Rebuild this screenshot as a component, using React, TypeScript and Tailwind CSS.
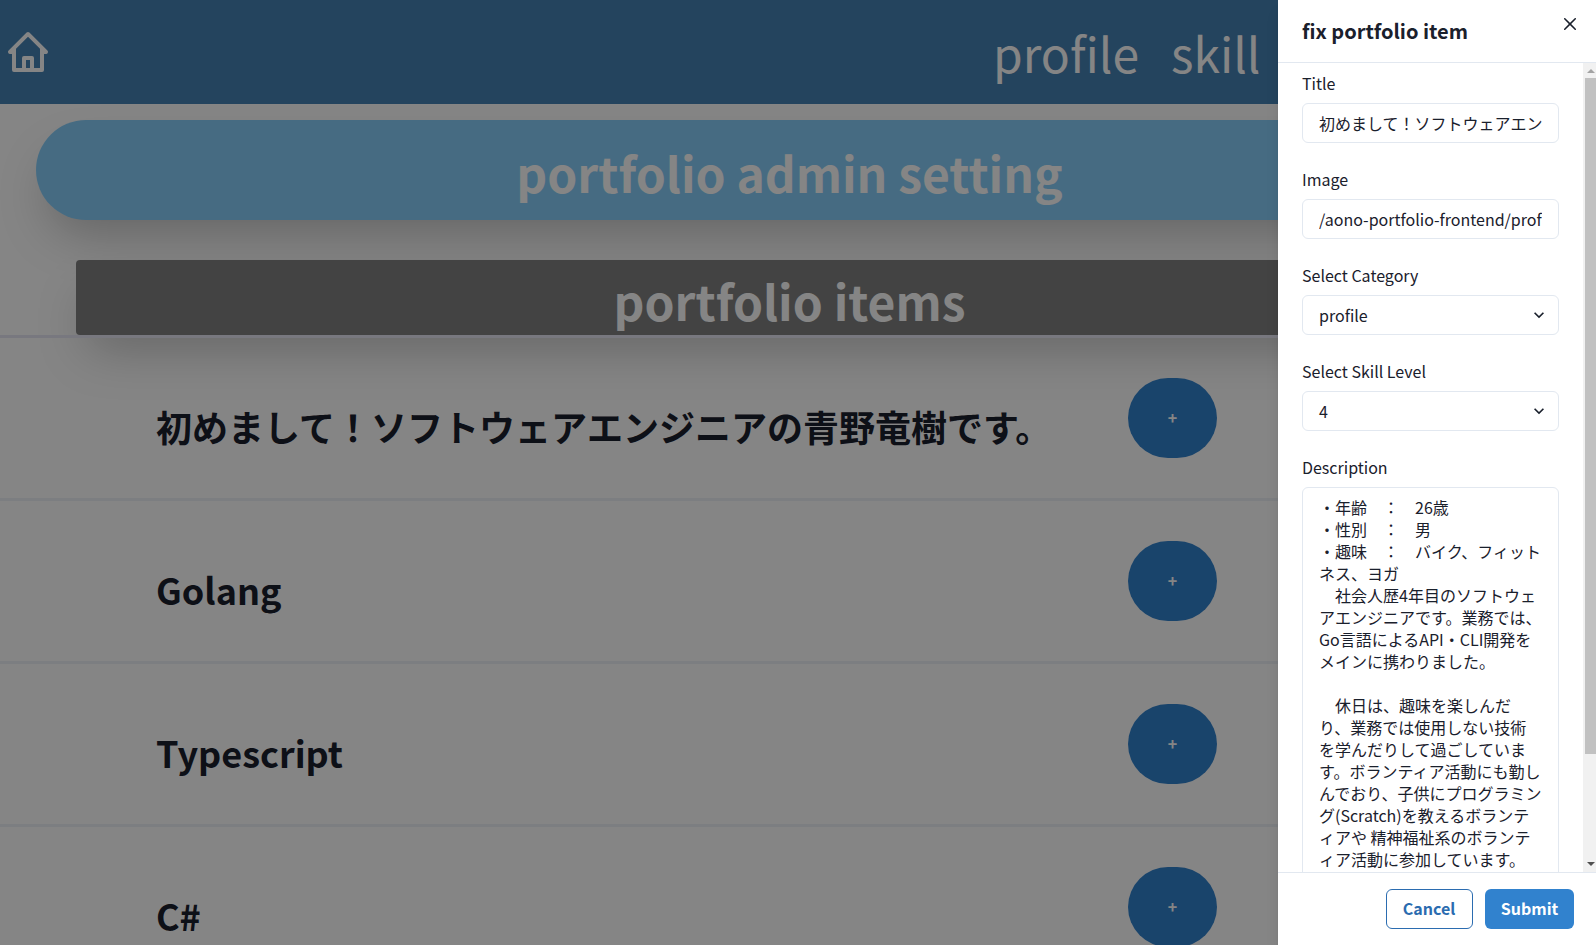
import React from "react";

const rows = ["初めまして！ソフトウェアエンジニアの青野竜樹です。", "Golang", "Typescript", "C#"];

const description = `・年齢　：　26歳
・性別　：　男
・趣味　：　バイク、フィットネス、ヨガ
　社会人歴4年目のソフトウェアエンジニアです。業務では、Go言語によるAPI・CLI開発をメインに携わりました。

　休日は、趣味を楽しんだり、業務では使用しない技術を学んだりして過ごしています。ボランティア活動にも勤しんでおり、子供にプログラミング(Scratch)を教えるボランティアや 精神福祉系のボランティア活動に参加しています。`;

function Label({ children }: { children: React.ReactNode }) {
  return <div className="mb-2 h-6 font-normal leading-6">{children}</div>;
}

function Field({ label, value }: { label: string; value: string }) {
  return (
    <div className="mb-6">
      <Label>{label}</Label>
      <div className="h-10 rounded-md border border-[#e2e8f0] px-4">
        <div className="overflow-hidden whitespace-nowrap leading-[38px]">{value}</div>
      </div>
    </div>
  );
}

function SelectField({ label, value }: { label: string; value: string }) {
  return (
    <div className="mb-6">
      <Label>{label}</Label>
      <div className="flex h-10 items-center justify-between rounded-md border border-[#e2e8f0] pl-4 pr-[9px]">
        <span className="leading-[38px]">{value}</span>
        <svg viewBox="0 0 24 24" className="size-5" fill="currentColor">
          <path d="M16.59 8.59L12 13.17 7.41 8.59 6 10l6 6 6-6z" />
        </svg>
      </div>
    </div>
  );
}

function Background() {
  return (
    <div className="h-full w-[1581px] shrink-0">
      <header className="flex h-[104px] items-center bg-[#4682b4] pl-1 text-white">
        <svg viewBox="0 0 24 24" className="size-12" fill="currentColor">
          <path d="M3 13h1v8a1 1 0 0 0 1 1h14a1 1 0 0 0 1-1v-8h1a1 1 0 0 0 .707-1.707l-9-9a.999.999 0 0 0-1.414 0l-9 9A1 1 0 0 0 3 13zm8 7v-4h2v4h-2zm1-15.586 6 6V20h-3v-5a1 1 0 0 0-1-1h-4a1 1 0 0 0-1 1v5H6v-9.586l6-6z" />
        </svg>
        <nav className="ml-[941px] flex gap-8 text-5xl leading-[72px]">
          <span>profile</span>
          <span>skill</span>
        </nav>
      </header>
      <h1 className="mx-9 mt-4 h-[100px] rounded-[50px] bg-[#87cefa] pr-0.5 pt-0.5 text-center text-5xl font-bold leading-[100px] text-white shadow-[0_25px_50px_-12px_rgba(0,0,0,0.25)]">
        portfolio admin setting
      </h1>
      <h2 className="mx-[76px] mt-10 h-[75px] rounded bg-[#808080] pr-0.5 pt-[3px] text-center text-5xl font-bold leading-[75px] text-white shadow-[0_25px_50px_-12px_rgba(0,0,0,0.25)]">
        portfolio items
      </h2>
      <div className="border-t-[3px] border-[#e6e6f4]">
        {rows.map((title) => (
          <div key={title} className="flex h-[163px] items-start border-b-[3px] border-[#edf2f7] pl-[156px] pt-10 text-[#1a202c]">
            <div className="w-[972px] whitespace-nowrap pt-2 text-4xl font-bold leading-[80px]">{title}</div>
            <div className="flex h-20 w-[89px] items-center justify-center rounded-[40px] bg-[#3182ce] text-base font-bold leading-[19.2px] text-white">
              +
            </div>
          </div>
        ))}
      </div>
    </div>
  );
}

export default function App() {
  return (
    <div className="relative h-[945px] w-[1596px] overflow-hidden bg-white font-['Noto_Sans_CJK_JP',sans-serif] text-base text-[#1a202c]">
      <Background />
      <div className="absolute inset-0 bg-black/48" />
      <aside className="absolute inset-y-0 right-0 flex w-[318px] flex-col bg-white shadow-[0_10px_15px_-3px_rgba(0,0,0,0.1),0_4px_6px_-2px_rgba(0,0,0,0.05)]">
        <div className="flex h-[63px] shrink-0 justify-between border-b border-[#e2e8f0] pl-6 pr-5 pt-4">
          <h3 className="text-xl font-bold leading-[30px]">fix portfolio item</h3>
          <svg viewBox="0 0 24 24" className="mt-0.5 size-3" fill="currentColor">
            <path d="M.439,21.44a1.5,1.5,0,0,0,2.122,2.121L11.823,14.3a.25.25,0,0,1,.354,0l9.262,9.263a1.5,1.5,0,1,0,2.122-2.121L14.3,12.177a.25.25,0,0,1,0-.354l9.263-9.262A1.5,1.5,0,0,0,21.439.44L12.177,9.7a.25.25,0,0,1-.354,0L2.561.44A1.5,1.5,0,0,0,.439,2.561L9.7,11.823a.25.25,0,0,1,0,.354Z" />
          </svg>
        </div>
        <div className="flex min-h-0 flex-1">
          <div className="min-w-0 flex-1 overflow-hidden pl-6 pr-6 pt-2">
            <Field label="Title" value="初めまして！ソフトウェアエン" />
            <Field label="Image" value="/aono-portfolio-frontend/prof" />
            <SelectField label="Select Category" value="profile" />
            <SelectField label="Select Skill Level" value="4" />
            <Label>Description</Label>
            <div className="h-[500px] whitespace-pre-wrap rounded-md border border-[#e2e8f0] px-4 pt-2 leading-[22px]">
              {description}
            </div>
          </div>
          <div className="flex w-[13px] flex-col bg-[#f1f1f1]">
            <div className="flex h-[15px] items-center justify-center pl-0.5">
              <svg viewBox="0 0 8 4" className="h-1 w-2" fill="#a3a3a3"><path d="M0 4 4 0l4 4z" /></svg>
            </div>
            <div className="ml-0.5 h-[676px] bg-[#c1c1c1]" />
            <div className="mt-auto flex h-[15px] items-start justify-center pl-0.5 pt-[5px]">
              <svg viewBox="0 0 8 4" className="h-1 w-2" fill="#505050"><path d="M0 0l4 4 4-4z" /></svg>
            </div>
          </div>
        </div>
        <div className="flex h-[73px] shrink-0 items-start justify-end gap-3 border-t border-[#e2e8f0] pr-[22px] pt-4 font-bold leading-[19.2px]">
          <div className="flex h-10 w-[87px] items-center justify-center rounded-md border border-[#2b6cb0] pr-px text-[#2b6cb0]">Cancel</div>
          <div className="flex h-10 w-[89px] items-center justify-center rounded-md bg-[#3182ce] text-white">Submit</div>
        </div>
      </aside>
    </div>
  );
}
